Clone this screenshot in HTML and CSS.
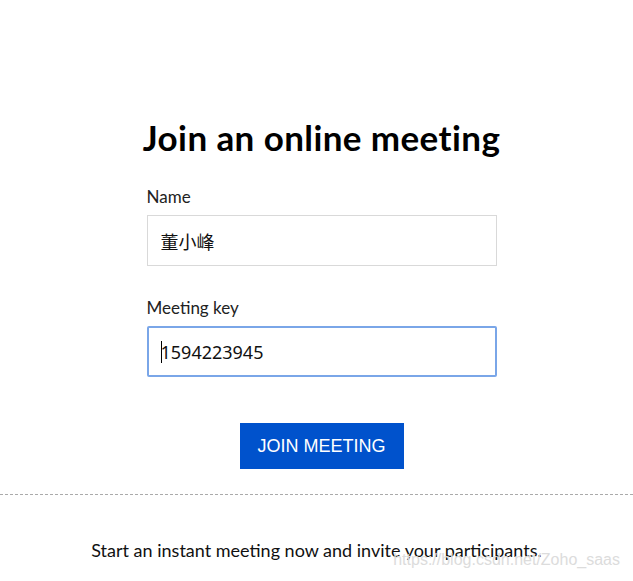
FILE: index.html
```html
<!DOCTYPE html>
<html lang="en">

<head>
    <meta charset="UTF-8">
    <meta name="viewport" content="width=device-width, initial-scale=1.0">
    <title>Join an online meeting</title>
    <link rel="stylesheet" href="styles.css">
</head>

<body>
    <div class="join">
        <h1>Join an online meeting</h1>
        <!-- Name -->
        <label class="field-label" for="nameInput">Name</label>
        <input class="field" type="text" id="nameInput" value="董小峰" />

        <!-- Meeting key -->
        <label class="field-label" for="keyInput">Meeting key</label>
        <div class="field-wrap">
            <input class="field field-active" type="text" id="keyInput" value="1594223945" />
            <span class="caret"></span>
        </div>

        <div class="actions">
            <button class="join-btn">JOIN MEETING</button>
        </div>
    </div>

    <div class="divider"></div>

    <div class="instant">
        <p>Start an instant meeting now and invite your participants.</p>
        <span class="watermark">https://blog.csdn.net/Zoho_saas</span>
    </div>
</body>

</html>
```

FILE: styles.css
```css
body {
    font-family: Lato, "Noto Sans", "Noto Sans CJK SC", sans-serif;
    background-color: #ffffff;
    color: #111111;
    margin: 0;
    padding: 0;
}

.join {
    width: 350px;
    margin: 0 auto;
    padding-top: 116px;
    padding-left: 10px;
    display: flex;
    flex-direction: column;
}

h1 {
    font-size: 35px;
    font-weight: 700;
    margin: 0 -20px 29px;
    text-align: center;
    color: #000000;
    line-height: 42px;
    letter-spacing: 0.4px;
}

.field-label {
    font-size: 17px;
    color: #222222;
    line-height: 20px;
    margin-bottom: 8px;
}

.field {
    box-sizing: border-box;
    width: 350px;
    height: 51px;
    padding: 0 13px;
    border: 1px solid #d9d9d9;
    border-radius: 0;
    font-family: "Noto Sans", "Noto Sans CJK SC", sans-serif;
    font-size: 18px;
    color: #111111;
    margin-bottom: 32px;
    outline: none;
}

.field-wrap {
    position: relative;
}

.field-active {
    display: block;
    border: 2px solid #7aa6e8;
    border-radius: 2px;
    padding: 0 12px;
    margin-bottom: 0;
}

.caret {
    position: absolute;
    left: 14px;
    top: 15px;
    width: 1px;
    height: 22px;
    background: #000000;
}

.actions {
    display: flex;
    justify-content: center;
    margin-top: 46px;
}

.join-btn {
    background: #0052cc;
    color: #ffffff;
    border: none;
    width: 164px;
    height: 46px;
    font-family: "Liberation Sans", Arial, sans-serif;
    font-size: 18px;
    cursor: pointer;
}

.divider {
    margin-top: 25px;
    border-top: 1px dashed #aaaaaa;
}

.instant {
    position: relative;
    text-align: center;
    padding-top: 44px;
    height: 62px;
}

.instant p {
    margin: 0;
    font-size: 18px;
    color: #111111;
    line-height: 22px;
}

.watermark {
    position: absolute;
    right: 13px;
    top: 56px;
    font-family: "Liberation Sans", Arial, sans-serif;
    font-size: 16px;
    color: #dcdcdc;
}
```
